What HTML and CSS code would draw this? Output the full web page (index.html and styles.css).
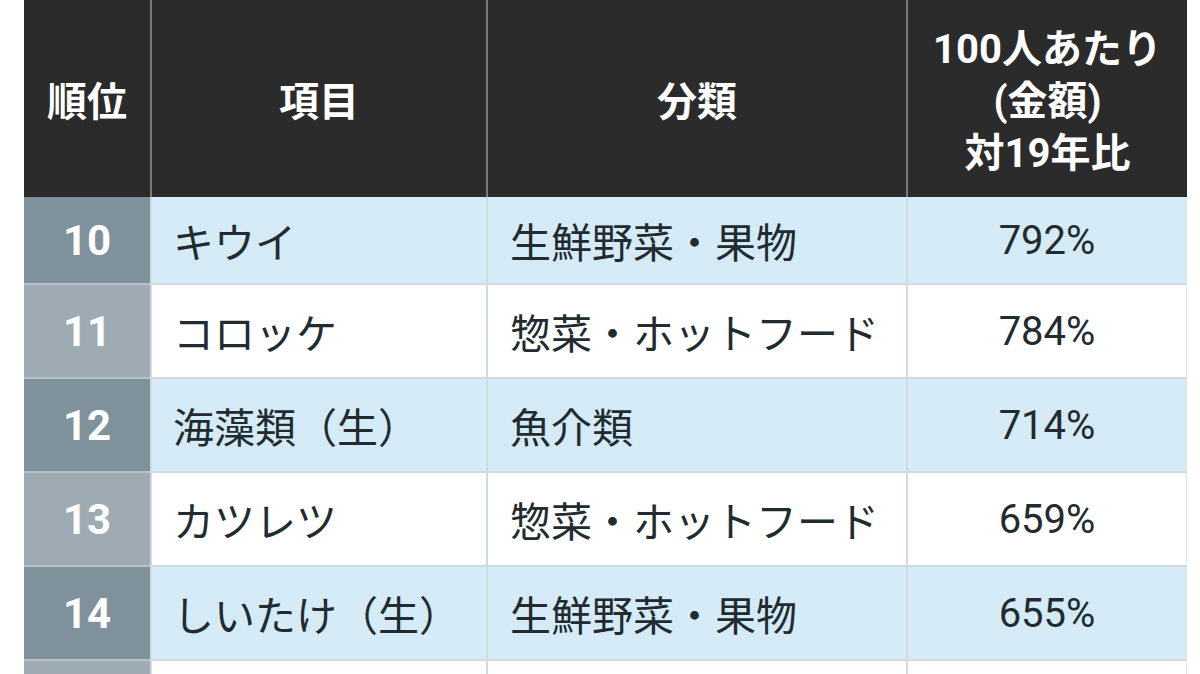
FILE: index.html
```html
<!DOCTYPE html>
<html lang="ja">
<head>
<meta charset="utf-8">
<title>ランキング</title>
<link rel="stylesheet" href="styles.css">
</head>
<body>
<div class="table">
  <div class="cell head rank-h">順位</div>
  <div class="cell head">項目</div>
  <div class="cell head">分類</div>
  <div class="cell head multi">100人あたり<br>(金額)<br>対19年比</div>

  <div class="cell rank blue">10</div>
  <div class="cell item blue">キウイ</div>
  <div class="cell cat blue">生鮮野菜・果物</div>
  <div class="cell pct blue">792%</div>

  <div class="cell rank white">11</div>
  <div class="cell item white">コロッケ</div>
  <div class="cell cat white">惣菜・ホットフード</div>
  <div class="cell pct white">784%</div>

  <div class="cell rank blue">12</div>
  <div class="cell item blue">海藻類（生）</div>
  <div class="cell cat blue">魚介類</div>
  <div class="cell pct blue">714%</div>

  <div class="cell rank white">13</div>
  <div class="cell item white">カツレツ</div>
  <div class="cell cat white">惣菜・ホットフード</div>
  <div class="cell pct white">659%</div>

  <div class="cell rank blue">14</div>
  <div class="cell item blue">しいたけ（生）</div>
  <div class="cell cat blue">生鮮野菜・果物</div>
  <div class="cell pct blue">655%</div>

  <div class="cell rank white"></div>
  <div class="cell item white"></div>
  <div class="cell cat white"></div>
  <div class="cell pct white"></div>
</div>
</body>
</html>
```
FILE: styles.css
```css
html, body {
  margin: 0;
  padding: 0;
  background: #ffffff;
}

body {
  font-family: Roboto, "Noto Sans CJK JP", sans-serif;
  overflow: hidden;
}

.table {
  margin-left: 24px;
  width: 1163px;
  display: grid;
  grid-template-columns: 126px 336px 420px 281px;
  grid-template-rows: 197px 88px 94px 94px 94px 94px 94px;
}

.cell {
  box-sizing: border-box;
  display: flex;
  align-items: center;
  font-size: 41px;
  color: #222b30;
  white-space: nowrap;
}

.head {
  background: #2b2b2b;
  color: #ffffff;
  font-weight: 700;
  font-size: 40px;
  justify-content: center;
  text-align: center;
  border-left: 2px solid #7a7a7a;
}

.rank-h {
  border-left: none;
}

.multi {
  line-height: 52px;
  padding-top: 6px;
}

.rank {
  justify-content: center;
  color: #ffffff;
  font-weight: 700;
  font-size: 42px;
  border-bottom: 2px solid #b7c2c8;
}

.rank.blue {
  background: #7f919b;
}

.rank.white {
  background: #9eabb2;
}

.item, .cat, .pct {
  border-left: 2px solid #d3dade;
  border-bottom: 2px solid #d3dade;
}

.item {
  padding-left: 21px;
}

.cat {
  padding-left: 22px;
}

.pct {
  justify-content: center;
  font-size: 40px;
  border-right: 1px solid #dfe4e7;
}

.item.blue, .cat.blue, .pct.blue {
  background: #d5ebf7;
}

.item.white, .cat.white, .pct.white {
  background: #ffffff;
}
```
